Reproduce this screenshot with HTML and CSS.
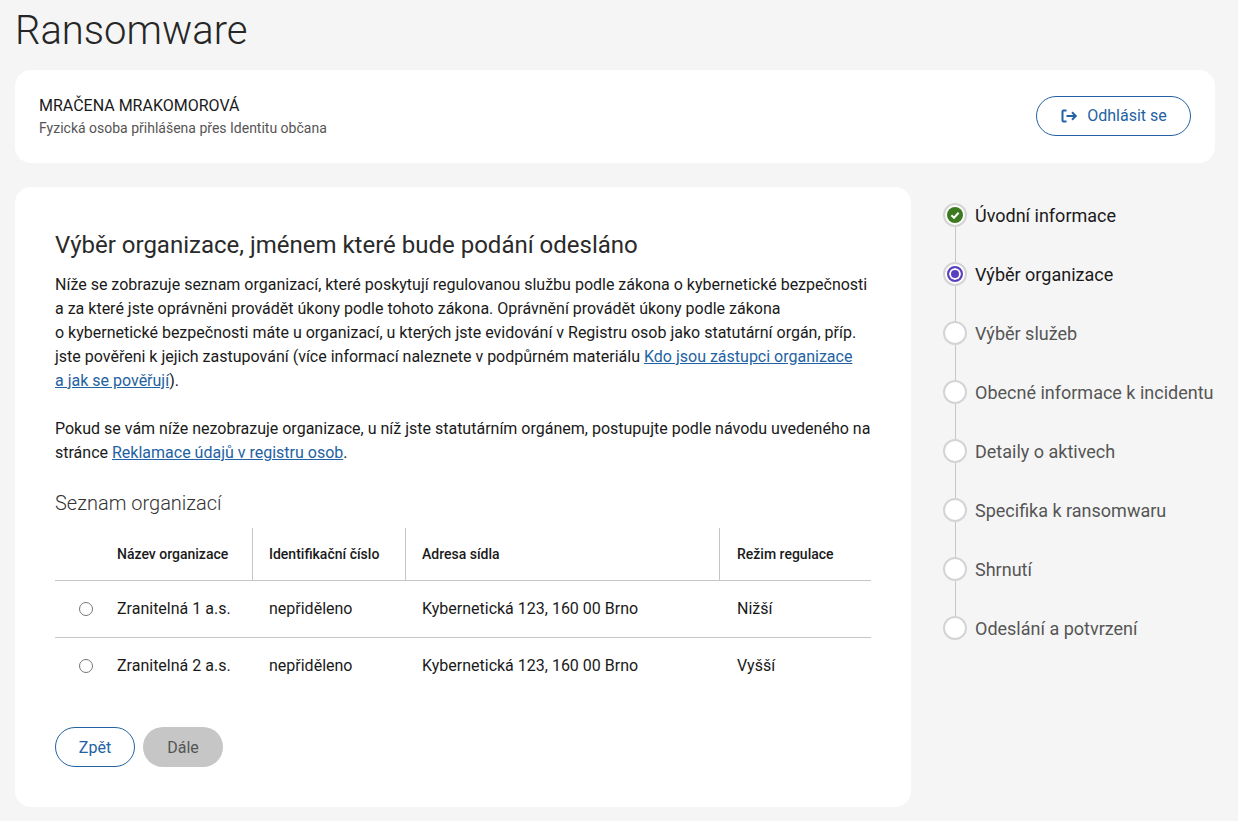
FILE: index.html
```html
<!DOCTYPE html>
<html lang="cs">
<head>
    <meta charset="UTF-8">
    <meta name="viewport" content="width=device-width, initial-scale=1.0">
    <title>Ransomware</title>
    <link rel="stylesheet" href="styles.css">
</head>
<body>
    <div class="page">
        <h1 class="page-title">Ransomware</h1>

        <div class="user-card">
            <div>
                <div class="user-name">MRAČENA MRAKOMOROVÁ</div>
                <div class="user-note">Fyzická osoba přihlášena přes Identitu občana</div>
            </div>
            <a class="btn btn-outline btn-logout" href="#">
                <svg class="logout-icon" width="18" height="16" viewBox="0 0 18 16" fill="none" stroke="currentColor" stroke-width="2">
                    <path d="M6.5 2.5H3.5a1 1 0 0 0-1 1v9a1 1 0 0 0 1 1h3"/>
                    <path d="M6.5 8h9"/>
                    <path d="M12 4.2 15.8 8 12 11.8"/>
                </svg>
                Odhlásit se
            </a>
        </div>

        <div class="layout">
            <main class="main-card">
                <h2>Výběr organizace, jménem které bude podání odesláno</h2>
                <p>Níže se zobrazuje seznam organizací, které poskytují regulovanou službu podle zákona o&nbsp;kybernetické bezpečnosti a&nbsp;za které jste oprávněni provádět úkony podle tohoto zákona. Oprávnění provádět úkony podle zákona o&nbsp;kybernetické bezpečnosti máte u&nbsp;organizací, u&nbsp;kterých jste evidování v&nbsp;Registru osob jako statutární orgán, příp. jste pověřeni k&nbsp;jejich zastupování (více informací naleznete v&nbsp;podpůrném materiálu <a href="#">Kdo jsou zástupci organizace a&nbsp;jak se pověřují</a>).</p>
                <p>Pokud se vám níže nezobrazuje organizace, u&nbsp;níž jste statutárním orgánem, postupujte podle návodu uvedeného na stránce <a href="#">Reklamace údajů v&nbsp;registru osob</a>.</p>

                <h3>Seznam organizací</h3>
                <table class="org-table">
                    <thead>
                        <tr>
                            <th class="col-radio"></th>
                            <th class="col-name">Název organizace</th>
                            <th class="col-id">Identifikační číslo</th>
                            <th class="col-address">Adresa sídla</th>
                            <th>Režim regulace</th>
                        </tr>
                    </thead>
                    <tbody>
                        <tr>
                            <td class="col-radio"><span class="radio"></span></td>
                            <td>Zranitelná 1 a.s.</td>
                            <td>nepřiděleno</td>
                            <td>Kybernetická 123, 160 00 Brno</td>
                            <td>Nižší</td>
                        </tr>
                        <tr>
                            <td class="col-radio"><span class="radio"></span></td>
                            <td>Zranitelná 2 a.s.</td>
                            <td>nepřiděleno</td>
                            <td>Kybernetická 123, 160 00 Brno</td>
                            <td>Vyšší</td>
                        </tr>
                    </tbody>
                </table>

                <div class="actions">
                    <a class="btn btn-outline" href="#">Zpět</a>
                    <span class="btn btn-disabled">Dále</span>
                </div>
            </main>

            <ol class="steps">
                <li class="step done">
                    <span class="step-dot">
                        <svg width="16" height="16" viewBox="0 0 16 16" fill="none"><circle cx="8" cy="8" r="8" fill="#3b7a1e"/><path d="M4.4 8.2 7 10.7l4.6-5" stroke="#fff" stroke-width="2"/></svg>
                    </span>
                    <span class="step-label">Úvodní informace</span>
                </li>
                <li class="step current"><span class="step-dot"><span class="step-inner"></span></span><span class="step-label">Výběr organizace</span></li>
                <li class="step"><span class="step-dot"></span><span class="step-label">Výběr služeb</span></li>
                <li class="step"><span class="step-dot"></span><span class="step-label">Obecné informace k incidentu</span></li>
                <li class="step"><span class="step-dot"></span><span class="step-label">Detaily o aktivech</span></li>
                <li class="step"><span class="step-dot"></span><span class="step-label">Specifika k ransomwaru</span></li>
                <li class="step"><span class="step-dot"></span><span class="step-label">Shrnutí</span></li>
                <li class="step"><span class="step-dot"></span><span class="step-label">Odeslání a potvrzení</span></li>
            </ol>
        </div>
    </div>
</body>
</html>
```

FILE: styles.css
```css
* {
    margin: 0;
    padding: 0;
    box-sizing: border-box;
}

body {
    background: #f5f5f5;
    color: #1a1a1a;
    font-family: Roboto, "Liberation Sans", sans-serif;
    font-size: 16px;
    line-height: 24px;
}

a {
    color: #2362a2;
}

.page {
    padding: 0 15px;
}

.page-title {
    font-size: 40px;
    font-weight: 300;
    line-height: 62px;
    color: #262626;
    margin-bottom: 8px;
}

.user-card {
    display: flex;
    justify-content: space-between;
    align-items: center;
    width: 1200px;
    height: 93px;
    padding: 0 24px 2px;
    background: white;
    border-radius: 16px;
    margin-bottom: 24px;
}

.user-name {
    line-height: 24px;
}

.user-note {
    font-size: 14px;
    line-height: 20px;
    color: #555;
}

.btn {
    display: inline-flex;
    align-items: center;
    justify-content: center;
    height: 40px;
    width: 80px;
    border-radius: 20px;
    text-decoration: none;
}

.btn-outline {
    border: 1px solid #2362a2;
    background: white;
    color: #2362a2;
}

.btn-disabled {
    background: #c6c6c6;
    color: #555;
}

.btn-logout {
    width: 155px;
    gap: 9px;
}

.layout {
    display: flex;
    gap: 32px;
    align-items: flex-start;
}

.main-card {
    width: 896px;
    height: 620px;
    padding: 40px;
    background: white;
    border-radius: 16px;
}

.main-card h2 {
    font-size: 24px;
    font-weight: 400;
    line-height: 36px;
    color: #2a2a2a;
    margin-bottom: 10px;
}

.main-card p {
    margin-bottom: 24px;
}

.main-card h3 {
    font-size: 20px;
    font-weight: 300;
    line-height: 28px;
    color: #333;
    margin-top: 24px;
    margin-bottom: 11px;
}

.org-table {
    width: 816px;
    border-collapse: separate;
    border-spacing: 0;
    table-layout: fixed;
}

.org-table th {
    height: 53px;
    padding: 0 16px;
    font-size: 14px;
    font-weight: 500;
    text-align: left;
    border-bottom: 1px solid #c6c6c6;
    border-right: 1px solid #c6c6c6;
}

.org-table th:first-child,
.org-table th:last-child {
    border-right: 0;
}

.org-table td {
    height: 57px;
    padding: 0 16px;
    border-bottom: 1px solid #c6c6c6;
}

.org-table th:last-child,
.org-table td:last-child {
    padding-left: 17px;
}

.org-table tr:last-child td {
    border-bottom-color: transparent;
}

.col-radio {
    width: 46px;
}

.col-name {
    width: 152px;
}

.col-id {
    width: 153px;
}

.col-address {
    width: 314px;
}

.org-table td.col-radio {
    padding: 0 0 0 24px;
}

.radio {
    display: block;
    width: 14px;
    height: 14px;
    border: 1px solid #767676;
    border-radius: 50%;
    background: white;
}

.actions {
    display: flex;
    gap: 8px;
    margin-top: 32px;
}

.actions .btn {
    padding-top: 2px;
}

.steps {
    list-style: none;
    padding-top: 16px;
}

.step {
    position: relative;
    display: flex;
    align-items: center;
    gap: 8px;
    height: 24px;
    margin-bottom: 35px;
    font-size: 18px;
    color: #555;
    white-space: nowrap;
}

.step::before {
    content: "";
    position: absolute;
    left: 12px;
    top: 24px;
    width: 1px;
    height: 35px;
    background: #c6c6c6;
}

.step:last-child::before {
    display: none;
}

.step.done,
.step.current {
    color: #1a1a1a;
}

.step-label {
    margin-top: 2px;
}

.step-dot {
    display: flex;
    align-items: center;
    justify-content: center;
    flex: none;
    width: 24px;
    height: 24px;
    border: 2px solid #d4d4d4;
    border-radius: 50%;
    background: white;
}

.step-inner {
    width: 16px;
    height: 16px;
    border: 2px solid #5a3fc0;
    border-radius: 50%;
    background: #5a3fc0;
    box-shadow: inset 0 0 0 2px white;
}
```
